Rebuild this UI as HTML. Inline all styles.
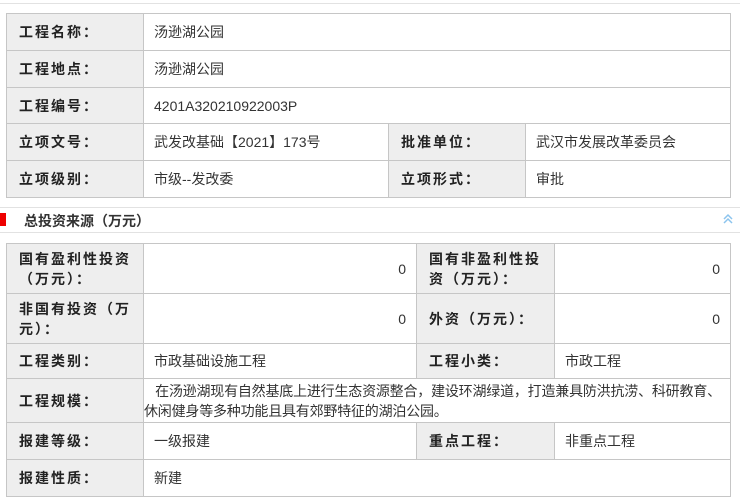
<!DOCTYPE html>
<html><head><meta charset="utf-8"><style>
*{margin:0;padding:0;box-sizing:border-box}
body{width:740px;height:497px;overflow:hidden;background:#fff;font-family:"Liberation Sans","Noto Sans CJK SC",sans-serif;position:relative}
table{position:absolute;left:6px;width:725px;border-collapse:collapse;table-layout:fixed}
td{border:1px solid #c6c6c6;font-size:14px;color:#333;padding:0 10px;vertical-align:middle}
td.l{background:#eee;font-weight:bold;color:#222;font-size:14px;letter-spacing:2px;padding-left:12px}
.hl{position:absolute;left:0;width:740px;height:1px;background:#e2e2e2}
</style></head><body>
<div class="hl" style="top:3px"></div>
<table style="top:13px">
<colgroup><col style="width:137px"><col style="width:245px"><col style="width:137px"><col></colgroup>
<tr style="height:37px"><td class="l">工程名称：</td><td colspan="3">汤逊湖公园</td></tr>
<tr style="height:37px"><td class="l">工程地点：</td><td colspan="3">汤逊湖公园</td></tr>
<tr style="height:36px"><td class="l">工程编号：</td><td colspan="3">4201A320210922003P</td></tr>
<tr style="height:37px"><td class="l">立项文号：</td><td>武发改基础【2021】173号</td><td class="l">批准单位：</td><td>武汉市发展改革委员会</td></tr>
<tr style="height:37px"><td class="l">立项级别：</td><td>市级--发改委</td><td class="l">立项形式：</td><td>审批</td></tr>
</table>
<div class="hl" style="top:207px"></div>
<div style="position:absolute;left:0;top:213px;width:6px;height:13px;background:#e00"></div>
<div style="position:absolute;left:24px;top:211px;font-size:14px;font-weight:bold;color:#333">总投资来源（万元）</div>
<svg style="position:absolute;left:722px;top:213px" width="12" height="12" viewBox="0 0 12 12"><path d="M2 6L6 2L10 6M2 10L6 6L10 10" fill="none" stroke="#8cc4ee" stroke-width="1.5"/></svg>
<div class="hl" style="top:232px"></div>
<table style="top:243px">
<colgroup><col style="width:137px"><col style="width:273px"><col style="width:138px"><col></colgroup>
<tr style="height:50px"><td class="l" style="line-height:20px">国有盈利性投资（万元）：</td><td style="text-align:right">0</td><td class="l" style="line-height:20px">国有非盈利性投资（万元）：</td><td style="text-align:right">0</td></tr>
<tr style="height:50px"><td class="l" style="line-height:20px">非国有投资（万元）：</td><td style="text-align:right">0</td><td class="l">外资（万元）：</td><td style="text-align:right">0</td></tr>
<tr style="height:35px"><td class="l">工程类别：</td><td>市政基础设施工程</td><td class="l">工程小类：</td><td>市政工程</td></tr>
<tr style="height:44px"><td class="l">工程规模：</td><td colspan="3" style="padding:0;line-height:20px;white-space:nowrap;overflow:hidden;letter-spacing:-0.2px">&nbsp;&nbsp;&nbsp;在汤逊湖现有自然基底上进行生态资源整合，建设环湖绿道，打造兼具防洪抗涝、科研教育、<br>休闲健身等多种功能且具有郊野特征的湖泊公园。</td></tr>
<tr style="height:37px"><td class="l">报建等级：</td><td>一级报建</td><td class="l">重点工程：</td><td>非重点工程</td></tr>
<tr style="height:37px"><td class="l">报建性质：</td><td colspan="3">新建</td></tr>
</table>
</body></html>
